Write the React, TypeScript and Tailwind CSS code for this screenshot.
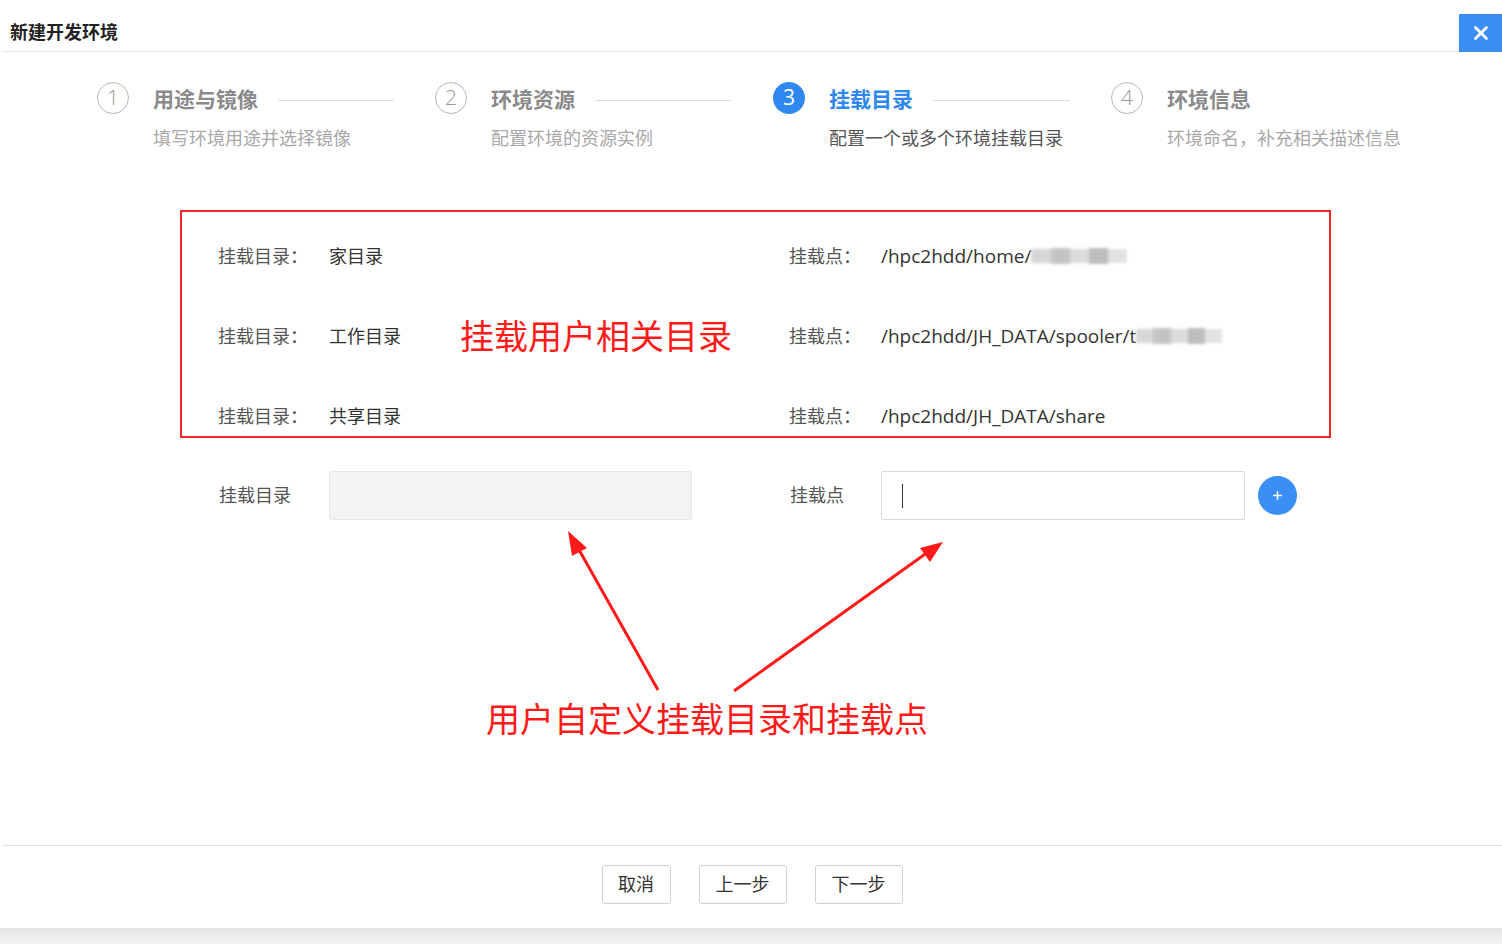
import { X, Plus } from "lucide-react";

const font = "font-['Open_Sans','Noto_Sans_CJK_SC',sans-serif]";

const steps = [
  { n: 1, title: "用途与镜像", desc: "填写环境用途并选择镜像" },
  { n: 2, title: "环境资源", desc: "配置环境的资源实例" },
  { n: 3, title: "挂载目录", desc: "配置一个或多个环境挂载目录", active: true },
  { n: 4, title: "环境信息", desc: "环境命名，补充相关描述信息" },
];

function Redacted({ w }: { w: number }) {
  return (
    <span className="inline-flex h-[18px] items-center gap-0 align-middle blur-[1.5px]" style={{ width: w }}>
      <span className="h-[14px] flex-1 bg-[#d6d6d6]" />
      <span className="h-[16px] flex-1 bg-[#c4c4c4]" />
      <span className="h-[14px] flex-1 bg-[#dcdcdc]" />
      <span className="h-[16px] flex-1 bg-[#bdbdbd]" />
      <span className="h-[14px] flex-1 bg-[#e2e2e2]" />
    </span>
  );
}

function MountRow({ dir, point, note }: { dir: string; point: React.ReactNode; note?: string }) {
  return (
    <div className="flex h-[40px] items-center text-[18px]">
      <div className="w-[111px] text-[#555]">挂载目录：</div>
      <div className="flex w-[460px] items-center text-[#333]">
        <span className="w-[131px]">{dir}</span>
        {note && <span className="text-[34px] text-[#ff1a1a]">{note}</span>}
      </div>
      <div className="w-[92px] text-[#555]">挂载点：</div>
      <div className="text-[19px] text-[#333]">{point}</div>
    </div>
  );
}

export default function App() {
  return (
    <div className={`relative flex h-[944px] w-full flex-col bg-white ${font}`}>
      {/* header */}
      <div className="flex h-[52px] items-stretch">
        <div className="ml-[2px] flex flex-1 items-center border-b border-[#e6e6e6] pl-[8px] pt-[14px] text-[18px] font-bold text-[#222]">
          新建开发环境
        </div>
        <div className="flex flex-col">
          <div className="h-[14px]" />
          <button className="flex h-[38px] w-[43px] items-center justify-center bg-[#3a8ef6] text-white">
            <X size={22} strokeWidth={3} />
          </button>
        </div>
      </div>

      {/* steps */}
      <div className="mt-[30px] flex pl-[97px]">
        {steps.map((s, i) => (
          <div key={s.n} className="flex w-[338px]">
            <div
              className={`flex h-[32px] w-[32px] shrink-0 items-center justify-center rounded-full text-[21px] ${
                s.active ? "bg-[#2f88f0] text-white" : "border border-[#b8b8b8] font-light text-[#999]"
              }`}
            >
              {s.n}
            </div>
            <div className="ml-[24px] flex flex-1 flex-col">
              <div className="flex h-[36px] items-center">
                <span className={`text-[21px] font-bold ${s.active ? "text-[#2f88f0]" : "text-[#8a8a8a]"}`}>{s.title}</span>
                {i < steps.length - 1 && <span className="ml-[20px] mr-[41px] h-px flex-1 bg-[#dcdcdc]" />}
              </div>
              <div className={`mt-[7px] whitespace-nowrap text-[18px] ${s.active ? "text-[#555]" : "text-[#a8a8a8]"}`}>{s.desc}</div>
            </div>
          </div>
        ))}
      </div>

      {/* existing mounts */}
      <div className="ml-[180px] mt-[58px] flex h-[228px] w-[1151px] flex-col gap-[40px] border-2 border-[#f02a2a] pl-[36px] pt-[24px]">
        <MountRow dir="家目录" point={<span className="flex items-center">/hpc2hdd/home/<Redacted w={96} /></span>} />
        <MountRow
          dir="工作目录"
          note="挂载用户相关目录"
          point={<span className="flex items-center">/hpc2hdd/JH_DATA/spooler/t<Redacted w={86} /></span>}
        />
        <MountRow dir="共享目录" point="/hpc2hdd/JH_DATA/share" />
      </div>

      {/* new mount input */}
      <div className="ml-[219px] mt-[33px] flex h-[49px] items-center text-[18px] text-[#555]">
        <div className="w-[110px]">挂载目录</div>
        <div className="h-[49px] w-[363px] rounded-[2px] border border-[#e8e8e8] bg-[#f3f3f3]" />
        <div className="ml-[98px] w-[91px]">挂载点</div>
        <div className="flex h-[49px] w-[364px] items-center rounded-[2px] border border-[#d9d9d9] bg-white pl-[20px]">
          <span className="h-[24px] w-px bg-[#333]" />
        </div>
        <button className="ml-[13px] flex h-[39px] w-[39px] items-center justify-center rounded-full bg-[#3a8ef6] text-white">
          <Plus size={13} strokeWidth={3} />
        </button>
      </div>

      {/* annotation caption */}
      <div className="ml-[486px] mt-[177px] text-[34px] leading-[44px] text-[#ff1a1a]">用户自定义挂载目录和挂载点</div>

      <div className="flex-1" />

      {/* footer */}
      <div className="ml-[2px] flex h-[83px] justify-center gap-[28px] border-t border-[#e2e2e2] pt-[19px]">
        <button className="h-[39px] w-[69px] rounded-[3px] border border-[#d0d0d0] bg-white text-[18px] text-[#333]">取消</button>
        <button className="h-[39px] w-[88px] rounded-[3px] border border-[#d0d0d0] bg-white text-[18px] text-[#333]">上一步</button>
        <button className="h-[39px] w-[88px] rounded-[3px] border border-[#d0d0d0] bg-white text-[18px] text-[#333]">下一步</button>
      </div>
      <div className="h-[16px] bg-gradient-to-b from-[#e4e4e4] to-[#f4f4f4]" />

      {/* arrows */}
      <svg className="pointer-events-none absolute left-0 top-0" width="1502" height="944">
        <line x1="658" y1="690" x2="578" y2="548" stroke="#ff1a1a" strokeWidth="3" />
        <polygon points="568,531 572,556 587,548" fill="#ff1a1a" />
        <line x1="734" y1="691" x2="928" y2="552" stroke="#ff1a1a" strokeWidth="3" />
        <polygon points="943,542 920,548 930,562" fill="#ff1a1a" />
      </svg>
    </div>
  );
}
